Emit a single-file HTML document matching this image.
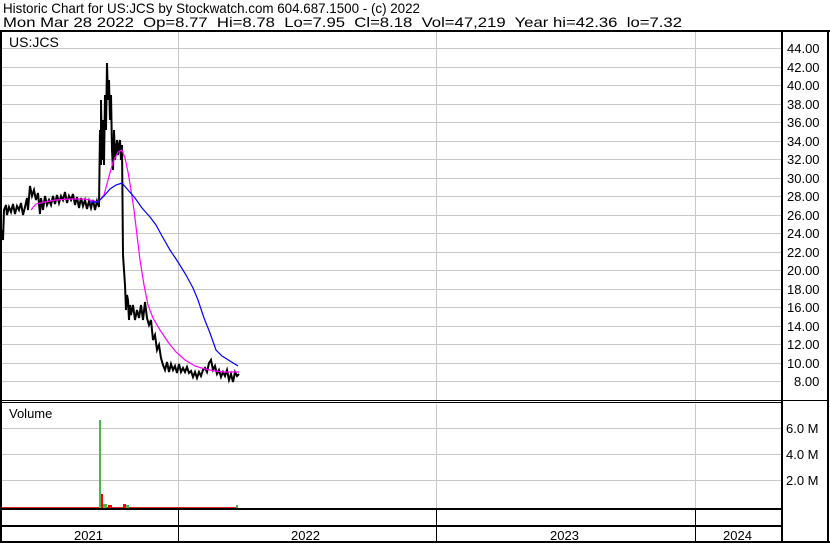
<!DOCTYPE html>
<html><head><style>
body{margin:0;background:#fff;width:830px;height:543px;overflow:hidden;font-family:"Liberation Sans",Arial,sans-serif}
text{white-space:pre}
</style></head><body>
<svg width="830" height="543" xmlns="http://www.w3.org/2000/svg" font-family="Liberation Sans, Arial, sans-serif" shape-rendering="crispEdges">
<rect width="830" height="543" fill="#fff"/>
<text x="3" y="13" font-size="14" fill="#000" textLength="417" lengthAdjust="spacingAndGlyphs">Historic Chart for US:JCS by Stockwatch.com 604.687.1500 - (c) 2022</text>
<text x="3" y="27" font-size="14" fill="#000" xml:space="preserve" textLength="679" lengthAdjust="spacingAndGlyphs">Mon Mar 28 2022  Op=8.77  Hi=8.78  Lo=7.95  Cl=8.18  Vol=47,219  Year hi=42.36  lo=7.32</text>
<g fill="#c8c8c8">
<rect x="2" y="48" width="780" height="1"/><rect x="2" y="67" width="780" height="1"/><rect x="2" y="85" width="780" height="1"/><rect x="2" y="104" width="780" height="1"/><rect x="2" y="122" width="780" height="1"/><rect x="2" y="141" width="780" height="1"/><rect x="2" y="159" width="780" height="1"/><rect x="2" y="178" width="780" height="1"/><rect x="2" y="196" width="780" height="1"/><rect x="2" y="215" width="780" height="1"/><rect x="2" y="233" width="780" height="1"/><rect x="2" y="252" width="780" height="1"/><rect x="2" y="270" width="780" height="1"/><rect x="2" y="289" width="780" height="1"/><rect x="2" y="307" width="780" height="1"/><rect x="2" y="326" width="780" height="1"/><rect x="2" y="344" width="780" height="1"/><rect x="2" y="363" width="780" height="1"/><rect x="2" y="381" width="780" height="1"/>
<rect x="178" y="32" width="1" height="369"/><rect x="436" y="32" width="1" height="369"/><rect x="695" y="32" width="1" height="369"/>
<rect x="178" y="404" width="1" height="105"/><rect x="436" y="404" width="1" height="105"/><rect x="695" y="404" width="1" height="105"/>
<rect x="2" y="428" width="780" height="1"/><rect x="2" y="454" width="780" height="1"/><rect x="2" y="480" width="780" height="1"/>
</g>
<g fill="#000">
<rect x="0" y="30" width="830" height="2"/>
<rect x="0" y="30" width="2" height="513"/>
<rect x="827" y="30" width="2" height="513"/>
<rect x="0" y="541" width="830" height="2"/>
<rect x="781" y="30" width="2" height="513"/>
<rect x="0" y="400" width="782" height="1"/>
<rect x="0" y="402" width="782" height="1"/>
<rect x="782" y="400" width="46" height="1"/>
<rect x="0" y="508" width="782" height="2"/>
<rect x="0" y="525" width="782" height="2"/>
<rect x="178" y="509" width="1" height="33"/>
<rect x="436" y="509" width="1" height="33"/>
<rect x="695" y="509" width="1" height="33"/>
</g>
<text x="9" y="47" font-size="14" fill="#000">US:JCS</text>
<text x="9" y="418" font-size="13" fill="#000">Volume</text>
<g font-size="13" fill="#000">
<text x="787" y="53">44.00</text><text x="787" y="72">42.00</text><text x="787" y="90">40.00</text><text x="787" y="109">38.00</text><text x="787" y="127">36.00</text><text x="787" y="146">34.00</text><text x="787" y="164">32.00</text><text x="787" y="183">30.00</text><text x="787" y="201">28.00</text><text x="787" y="220">26.00</text><text x="787" y="238">24.00</text><text x="787" y="257">22.00</text><text x="787" y="275">20.00</text><text x="787" y="294">18.00</text><text x="787" y="312">16.00</text><text x="787" y="331">14.00</text><text x="787" y="349">12.00</text><text x="787" y="368">10.00</text><text x="794" y="386">8.00</text>
<text x="786" y="433">6.0 M</text><text x="786" y="459">4.0 M</text><text x="786" y="485">2.0 M</text>
<text x="74" y="540">2021</text><text x="291" y="540">2022</text><text x="550" y="540">2023</text><text x="723" y="540">2024</text>
</g>
<rect x="2" y="507" width="236" height="1" fill="#e02020"/>
<rect x="99" y="420" width="2" height="88" fill="#4cb84c"/>
<rect x="101" y="494" width="2" height="14" fill="#f00"/>
<rect x="103" y="504" width="4" height="4" fill="#4cb84c"/>
<rect x="108" y="505" width="4" height="3" fill="#f00"/>
<rect x="123" y="504" width="3" height="4" fill="#f00"/>
<rect x="126" y="505" width="3" height="3" fill="#4cb84c"/>
<rect x="236" y="505" width="2" height="3" fill="#4cb84c"/>
<g shape-rendering="auto">
<polyline fill="none" stroke="#000" stroke-width="2" points="2,230 3,240 4,210 6,205 7,215 9,207 11,212 13,204 15,214 17,206 19,210 21,203 23,215 25,207 27,198 28,210 30,186 32,196 34,190 36,200 38,193 40,214 41,198 43,210 45,196 47,205 49,200 51,205 53,196 55,204 57,195 59,203 61,196 63,200 65,192 67,203 69,196 71,200 73,194 75,205 77,197 79,208 81,198 83,206 85,200 87,209 89,201 91,208 93,200 95,210 97,201 99,207 100,130 101,165 101,100 102,160 103,120 104,165 105,95 106,130 107,63 108,100 109,80 110,120 111,95 112,150 113,170 114,130 115,160 116,150 117,140 118,155 119,145 120,140 121,160 122,145 123,255 124,270 125,285 126,310 127,295 128,300 129,320 130,305 131,315 133,305 135,320 137,310 139,318 141,305 143,320 145,302 147,318 149,325 151,320 153,340 155,335 157,350 159,345 161,358 163,365 165,370 167,362 169,372 171,364 173,370 175,366 177,373 179,364 181,372 183,368 185,372 187,367 189,373 191,371 193,377 195,372 197,378 199,372 201,376 203,370 205,368 207,372 209,363 211,360 213,370 215,366 217,374 219,370 221,377 223,372 225,376 227,370 229,380 231,374 233,382 235,372 237,376 239,374"/>
<polyline fill="none" stroke="#ff00ff" stroke-width="1.2" points="31,210 36,204 45,202 55,200 70,199 85,199 98,202 104,195 108,180 113,162 118,152 122,150 125,158 128,172 131,190 134,210 137,235 140,260 144,285 148,305 153,318 160,330 168,342 176,352 185,360 195,366 205,369 215,371 225,372 239,372"/>
<polyline fill="none" stroke="#0000ff" stroke-width="1.2" points="90,202 98,202 104,196 110,189 116,185 122,183 128,190 135,198 142,208 150,217 156,225 162,236 170,250 178,262 186,275 193,288 198,300 204,318 210,333 216,350 222,356 230,361 238,366"/>
</g>
</svg>
</body></html>
